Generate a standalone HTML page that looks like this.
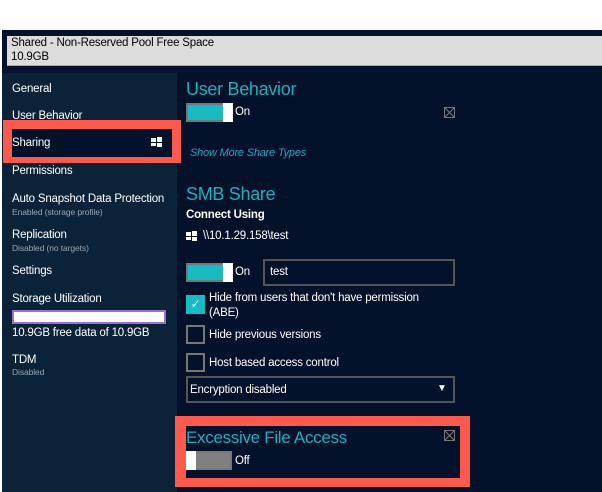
<!DOCTYPE html>
<html><head><meta charset="utf-8"><style>
*{margin:0;padding:0;box-sizing:border-box}
body{width:602px;height:492px;background:#fff;font-family:"Liberation Sans",sans-serif;position:relative;overflow:hidden;color:#fff;font-size:11.5px;letter-spacing:-0.2px}
.a{position:absolute}
.t{position:absolute;white-space:nowrap}
.h{color:#1ab0bd;font-size:18px;letter-spacing:-0.3px}
.sub{font-size:8.5px;color:#9aa6b2;letter-spacing:-0.1px}
.tog{position:absolute;width:47px;height:19px;border:2px solid #777;background:#16bcc4}
.tog::after{content:"";position:absolute;right:-2px;top:-2px;width:10px;height:19px;background:#fff}
.cb{position:absolute;width:19px;height:19px;border:2px solid #777}
.xi{position:absolute;width:11px;height:11px;border:1px solid #777;background:linear-gradient(45deg,transparent 45%,#777 45%,#777 55%,transparent 55%),linear-gradient(-45deg,transparent 45%,#777 45%,#777 55%,transparent 55%)}
.win{position:absolute;width:11px;height:10px}
.win i{position:absolute;background:#fff}
</style></head><body>
<div class="a" style="left:2px;top:30px;width:600px;height:462px;background:#04112a"></div>
<div class="a" style="left:7px;top:36px;width:595px;height:30px;background:#dcdcdc;border-bottom:1px solid #aaa"></div>
<div class="t" style="left:11px;top:37px;color:#000;font-size:11.5px">Shared - Non-Reserved Pool Free Space</div>
<div class="t" style="left:11px;top:51px;color:#000;font-size:11.5px">10.9GB</div>
<div class="a" style="left:2px;top:73px;width:175px;height:419px;background:#0b2338"></div>
<div class="t" style="left:12px;top:83px">General</div>
<div class="t" style="left:12px;top:110px">User Behavior</div>
<div class="a" style="left:3px;top:120px;width:178px;height:43px;background:#fd5a4c"></div>
<div class="a" style="left:12px;top:129px;width:160px;height:28px;background:#04112a"></div>
<div class="t" style="left:12px;top:137px">Sharing</div>
<div class="win" style="left:151px;top:137px"><i style="left:0;top:1px;width:5px;height:4px"></i><i style="left:6px;top:0;width:5px;height:5px"></i><i style="left:0;top:6px;width:5px;height:3px"></i><i style="left:6px;top:6px;width:5px;height:4px"></i></div>
<div class="t" style="left:12px;top:165px">Permissions</div>
<div class="t" style="left:12px;top:193px">Auto Snapshot Data Protection</div>
<div class="t sub" style="left:12px;top:207px">Enabled (storage profile)</div>
<div class="t" style="left:12px;top:229px">Replication</div>
<div class="t sub" style="left:12px;top:243px">Disabled (no targets)</div>
<div class="t" style="left:12px;top:265px">Settings</div>
<div class="t" style="left:12px;top:293px">Storage Utilization</div>
<div class="a" style="left:12px;top:310px;width:154px;height:14px;background:#fff;border:2px solid #9a6fd6"></div>
<div class="t" style="left:12px;top:327px">10.9GB free data of 10.9GB</div>
<div class="t" style="left:12px;top:354px">TDM</div>
<div class="t sub" style="left:12px;top:367px">Disabled</div>

<div class="t h" style="left:186px;top:79px">User Behavior</div>
<div class="tog" style="left:186px;top:103px"></div>
<div class="t" style="left:235px;top:106px">On</div>
<div class="xi" style="left:444px;top:107px"></div>
<div class="t" style="left:190px;top:147px;color:#1aa9c0;font-style:italic;font-size:11px">Show More Share Types</div>

<div class="t h" style="left:186px;top:184px">SMB Share</div>
<div class="t" style="left:186px;top:209px;font-weight:bold;font-size:11.5px">Connect Using</div>
<div class="win" style="left:186px;top:231px"><i style="left:0;top:1px;width:5px;height:4px"></i><i style="left:6px;top:0;width:5px;height:5px"></i><i style="left:0;top:6px;width:5px;height:3px"></i><i style="left:6px;top:6px;width:5px;height:4px"></i></div>
<div class="t" style="left:203px;top:230px">\\10.1.29.158\test</div>
<div class="tog" style="left:186px;top:263px"></div>
<div class="t" style="left:235px;top:266px">On</div>
<div class="a" style="left:263px;top:259px;width:192px;height:27px;border:2px solid #555"></div>
<div class="t" style="left:270px;top:266px">test</div>
<div class="cb" style="left:186px;top:295px;background:#16bcc4;border-color:#16bcc4;font-size:12px;text-align:center;line-height:15px">✓</div>
<div class="t" style="left:209px;top:292px">Hide from users that don't have permission</div>
<div class="t" style="left:209px;top:307px">(ABE)</div>
<div class="cb" style="left:186px;top:325px"></div>
<div class="t" style="left:209px;top:329px">Hide previous versions</div>
<div class="cb" style="left:186px;top:353px"></div>
<div class="t" style="left:209px;top:357px">Host based access control</div>
<div class="a" style="left:186px;top:376px;width:269px;height:27px;border:2px solid #555"></div>
<div class="t" style="left:190px;top:384px">Encryption disabled</div>
<div class="t" style="left:437px;top:383px;font-size:10px">▼</div>

<div class="a" style="left:175px;top:416px;width:295px;height:71px;background:#fd5a4c"></div>
<div class="a" style="left:186px;top:426px;width:274px;height:52px;background:#04112a"></div>
<div class="t h" style="left:186px;top:428px;font-size:17px">Excessive File Access</div>
<div class="xi" style="left:444px;top:430px"></div>
<div class="a" style="left:186px;top:451px;width:46px;height:19px;border:2px solid #777;background:#808080"></div>
<div class="a" style="left:186px;top:451px;width:10px;height:19px;background:#fff"></div>
<div class="t" style="left:235px;top:455px">Off</div>
</body></html>
